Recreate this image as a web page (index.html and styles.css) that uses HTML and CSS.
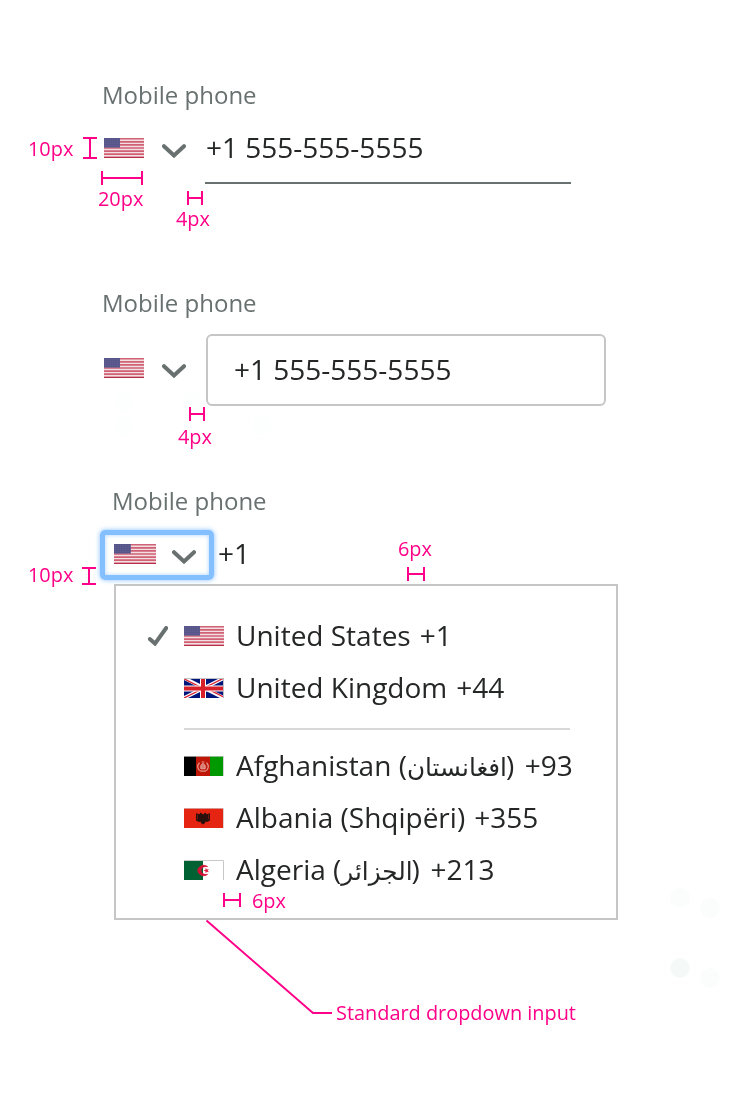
FILE: index.html
```html
<!DOCTYPE html>
<html lang="en">
<head>
<meta charset="utf-8">
<title>Mobile phone input</title>
<link rel="stylesheet" href="styles.css">
</head>
<body>
<svg class="defs" width="0" height="0" aria-hidden="true">
  <defs>
    <symbol id="us" viewBox="0 0 40 20" preserveAspectRatio="none">
      <rect width="40" height="20" fill="#f3dfe2"/>
      <path d="M0 .77H40M0 3.85H40M0 6.92H40M0 10H40M0 13.08H40M0 16.15H40M0 19.23H40" stroke="#cf6274" stroke-width="1.7"/>
      <path d="M0 19.5H40" stroke="#b52f48"/>
      <rect width="16" height="9.6" fill="#57568a"/>
      <path d="M1 1.5H16M1 3.5H16M1 5.5H16M1 7.5H16" stroke="#6b6999" stroke-width=".7" stroke-dasharray="1 1.4"/>
    </symbol>
    <symbol id="gb" viewBox="0 0 40 20" preserveAspectRatio="none">
      <rect width="40" height="20" fill="#00157a"/>
      <path d="M0 0 40 20M40 0 0 20" stroke="#fff" stroke-width="3.6"/>
      <path d="M0 .8 18 9.8M22 10.2 40 19.2M40 0 22 9M18 11 0 20" stroke="#d8202f" stroke-width="1.3"/>
      <path d="M19 0V20M0 10.5H40" stroke="#fff" stroke-width="6"/>
      <path d="M19 0V20M0 10.5H40" stroke="#d8202a" stroke-width="4"/>
      <path d="M0 .5H39.5V20" fill="none" stroke="#bfc1c8" stroke-width="1"/>
    </symbol>
    <symbol id="af" viewBox="0 0 40 20" preserveAspectRatio="none">
      <rect width="12" height="20"/>
      <rect x="12" width="14" height="20" fill="#bf1608"/>
      <rect x="26" width="13" height="20" fill="#009a00"/>
      <path d="M15.500 6.800C12.500 9.500 13.500 14 17 15.200H21C24.500 14 25.500 9.500 22.500 6.800" fill="none" stroke="#e3988e" stroke-width="1.2"/>
      <path d="M16.800 12.800V9.500L19 7.200l2.200 2.300V12.800ZM17.500 6H20.500" fill="#d77c70" stroke="#efb5ad" stroke-width=".8"/>
      <path d="M0 .4H39.500V20" fill="none" stroke="#c8c8c8" stroke-width=".8"/>
    </symbol>
    <symbol id="al" viewBox="0 0 40 20" preserveAspectRatio="none">
      <rect width="39" height="20" fill="#e62412"/>
      <path d="M12 5.200 15.500 6.300 16.500 4.500 19 6.500 21.500 4.500 22.500 6.300 26 5.200V12.500L23 14 21.500 13.500 21 15 19 16.500 17 15 16.500 13.500 15 14 12 12.500Z" fill="#29100d"/>
      <path d="M13.500 6.500v5M24.500 6.500v5" stroke="#8f1a10" stroke-width=".7"/>
      <path d="M0 .4H39.500V20" fill="none" stroke="#d2c5c4" stroke-width=".8"/>
    </symbol>
    <symbol id="dz" viewBox="0 0 40 20" preserveAspectRatio="none">
      <rect width="40" height="20" fill="#fff"/>
      <rect width="19" height="20" fill="#006233"/>
      <path d="M23.500 6.600A6 5 0 1 0 23.500 14.400 5 4.100 0 1 1 23.500 6.600Z" fill="#d21034" stroke="#d21034" stroke-width=".8"/>
      <path d="m19.500 10.500 2-.7.2-2 1.200 1.600 2-.4L23.700 10.500l1.200 1.700-2-.5-1.200 1.500-.2-2Z" fill="#e21b3c"/>
      <path d="M0 .5H39.500V20" fill="none" stroke="#c9c9c9"/>
    </symbol>
    <symbol id="chevron" viewBox="0 0 24 14">
      <path d="M2 2.200 12 11.500 22 2.200" fill="none" stroke="#697170" stroke-width="4" stroke-linecap="round"/>
    </symbol>
  </defs>
</svg>

<main class="spec">
  <section class="field field-line">
    <div class="label">Mobile phone</div>
    <div class="control">
      <div class="picker"><svg class="flag"><use href="#us"/></svg><svg class="chevron"><use href="#chevron"/></svg></div>
      <div class="value">+1 555-555-5555</div>
    </div>
  </section>

  <section class="field field-box">
    <div class="label">Mobile phone</div>
    <div class="control">
      <div class="picker"><svg class="flag"><use href="#us"/></svg><svg class="chevron"><use href="#chevron"/></svg></div>
      <div class="value">+1 555-555-5555</div>
    </div>
  </section>

  <section class="field field-open">
    <div class="label">Mobile phone</div>
    <div class="control">
      <div class="picker"><svg class="flag"><use href="#us"/></svg><svg class="chevron"><use href="#chevron"/></svg></div>
      <div class="value">+1</div>
    </div>
    <div class="menu">
      <div class="option">
        <svg class="check" viewBox="0 0 20 20"><path d="M1.800 13 7 17.600 18.200 2" fill="none" stroke="#697170" stroke-width="4" stroke-linecap="round"/></svg>
        <svg class="flag"><use href="#us"/></svg><span>United States</span><span class="code">+1</span>
      </div>
      <div class="option"><svg class="flag"><use href="#gb"/></svg><span>United Kingdom</span><span class="code">+44</span></div>
      <div class="divider"></div>
      <div class="option"><svg class="flag"><use href="#af"/></svg><span>Afghanistan (<bdi class="arabic af-name">افغانستان</bdi>)</span><span class="code">+93</span></div>
      <div class="option"><svg class="flag"><use href="#al"/></svg><span>Albania (Shqipëri)</span><span class="code">+355</span></div>
      <div class="option"><svg class="flag"><use href="#dz"/></svg><span>Algeria (<bdi class="arabic dz-name">الجزائر</bdi>)</span><span class="code">+213</span></div>
    </div>
  </section>

  <svg class="notes" viewBox="0 0 740 1104">
    <g fill="#fdfefe">
      <circle cx="124" cy="402" r="10"/><circle cx="192" cy="402" r="10"/><circle cx="124" cy="426" r="10"/><circle cx="262" cy="425" r="10"/>
      <circle cx="680" cy="898" r="10" fill="#fafdfc"/><circle cx="710" cy="908" r="10" fill="#fafdfc"/>
      <circle cx="680" cy="968" r="10" fill="#f5faf9"/><circle cx="710" cy="978" r="10" fill="#fafdfc"/>
    </g>
    <g class="marks">
      <path d="M83 138H97M83 158H97M90 138V158"/>
      <path d="M102 171V185M142 171V185M102 178H142"/>
      <path d="M188 191V205M202 191V205M188 198H202"/>
      <path d="M190 407V421M204 407V421M190 414H204"/>
      <path d="M82 568H96M82 584H96M89 568V584"/>
      <path d="M408 567V581M424 567V581M408 574H424"/>
      <path d="M224 893V907M240 893V907M224 900H240"/>
      <path d="M206.500 920.500 313 1013H332"/>
    </g>
    <g class="note-text">
      <text x="28" y="156">10px</text>
      <text x="98" y="206">20px</text>
      <text x="176" y="226">4px</text>
      <text x="178" y="444">4px</text>
      <text x="28" y="582">10px</text>
      <text x="398" y="556">6px</text>
      <text x="252" y="908">6px</text>
      <text x="336" y="1020">Standard dropdown input</text>
    </g>
  </svg>
</main>
</body>
</html>
```
FILE: styles.css
```css
* { box-sizing: border-box; }
body {
  margin: 0;
  background: #fff;
  font-family: "Open Sans", "Noto Sans", sans-serif;
  color: #252626;
}
.defs { position: absolute; }
.spec {
  position: relative;
  width: 740px;
  height: 1104px;
  padding-top: 79px;
  overflow: hidden;
}
.label {
  font-size: 24px;
  line-height: 32px;
  color: #697170;
}
.control { display: flex; align-items: flex-start; }
.picker { display: flex; align-items: flex-start; flex: none; }
.flag { display: block; flex: none; width: 40px; height: 20px; }
.chevron { display: block; width: 24px; height: 14px; margin: 6px 0 0 18px; }
.value { font-size: 28px; line-height: 38px; white-space: nowrap; }

.field-line { height: 208px; padding-left: 102px; }
.field-line .control { margin-top: 17px; }
.field-line .picker { width: 103px; padding: 10px 0 0 2px; }
.field-line .value { width: 366px; height: 56px; padding-left: 1px; border-bottom: 2px solid #697170; }

.field-box { height: 198px; padding-left: 102px; }
.field-box .control { margin-top: 15px; }
.field-box .picker { width: 104px; padding: 24px 0 0 2px; }
.field-box .value {
  width: 400px;
  height: 72px;
  padding: 14px 26px;
  border: 2px solid #c6c6c6;
  border-radius: 6px;
}

.field-open { padding-left: 100px; }
.field-open .label { padding-left: 12px; }
.field-open .control { margin-top: 13px; }
.field-open .picker {
  position: relative;
  z-index: 1;
  width: 114px;
  height: 50px;
  padding: 9px 0 0 9px;
  border: 5px solid #84bfff;
  border-radius: 5px;
  box-shadow: 0 0 5px #84bfff, inset 0 0 4px #a9d2ff;
}
.field-open .picker .flag { width: 42px; }
.field-open .chevron { margin-left: 16px; }
.field-open .value { padding: 4px 0 0 4px; }

.menu {
  width: 504px;
  height: 336px;
  margin: 4px 0 0 14px;
  padding: 23px 46px 0 30px;
  border: 2px solid #c6c6c6;
}
.option {
  display: flex;
  align-items: center;
  height: 52px;
  padding-left: 38px;
  font-size: 28px;
  line-height: 52px;
  white-space: nowrap;
}
.check { flex: none; width: 20px; height: 20px; margin: 2px 16px 0 -36px; }
.option .flag { margin: 2px 12px 0 0; }
.code { margin-left: 9px; }
.divider { height: 2px; margin: 15px 0 9px 38px; background: #d8d8d8; }
.arabic {
  display: inline-block;
  line-height: 38px;
  font-family: "DejaVu Sans", sans-serif;
  font-size: 24.7px;
}
.af-name { margin-right: -1px; }
.dz-name { margin-right: -1px; }
.option:has(.arabic) .code { margin-left: 10.5px; }

.notes { position: absolute; inset: 0; width: 740px; height: 1104px; mix-blend-mode: multiply; }
.marks { fill: none; stroke: #ff0088; stroke-width: 2; }
.note-text { fill: #ff0088; font-size: 19.900px; }
```
